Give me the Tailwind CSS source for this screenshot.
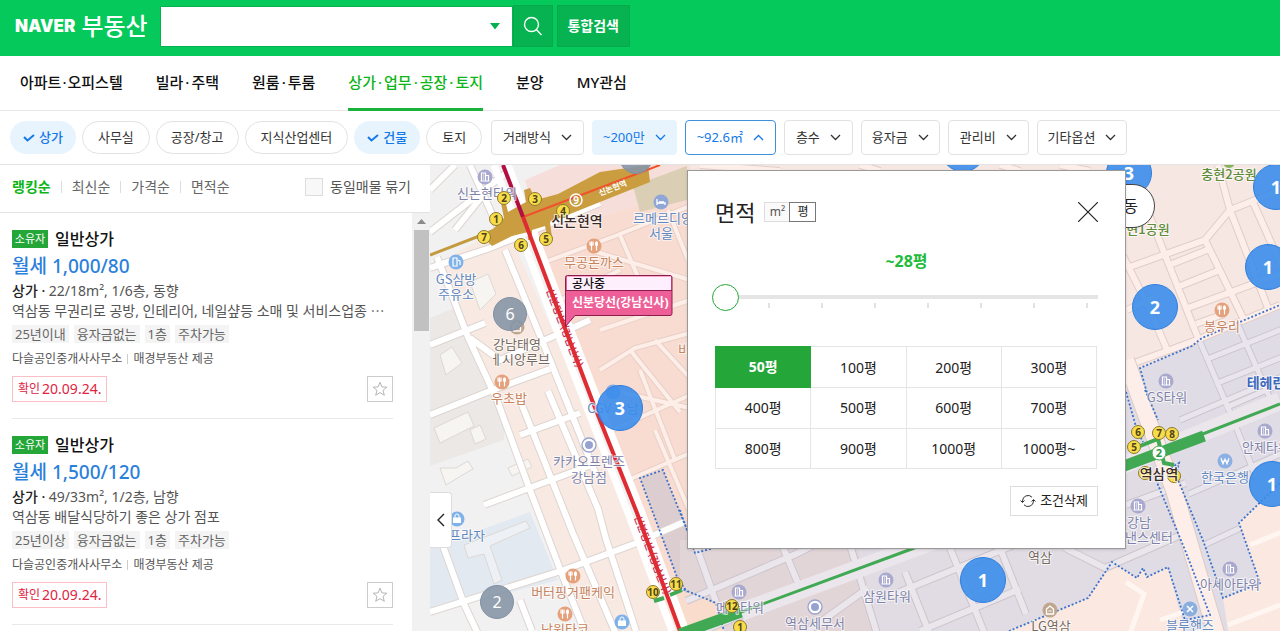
<!DOCTYPE html>
<html lang="ko">
<head>
  <meta charset="UTF-8" />
  <meta name="viewport" content="width=device-width, initial-scale=1.0" />
  <title>네이버 부동산</title>
  <script src="https://cdn.jsdelivr.net/npm/@tailwindcss/browser@4"></script>
  <style>
    body {
      font-family: 'Noto Sans', 'Noto Sans CJK KR', sans-serif;
    }
  </style>
</head>
<body class="h-screen flex flex-col overflow-hidden bg-white text-[#222]">

  <!-- Header -->
  <header class="flex items-center h-14 shrink-0 bg-[#05c95b] pl-[15px] pb-1">
    <a href="#" class="flex items-center gap-1.5 text-white mr-3">
      <span class="font-['Inter'] font-black text-[17px] leading-6">NAVER</span>
      <span class="text-2xl leading-8 font-medium">부동산</span>
    </a>
    <form class="flex items-center" role="search">
      <div class="relative">
        <input type="text" aria-label="검색어" class="block w-[353px] h-[41px] bg-white border border-[#04b34f] px-3 text-sm outline-none" />
        <svg class="absolute right-[13px] top-[17px]" width="10" height="7" viewBox="0 0 10 7"><path d="M0 0h10L5 6.5z" fill="#04b050" /></svg>
      </div>
      <button type="submit" aria-label="검색" class="flex items-center justify-center w-10 h-[42px] bg-[#06b350] border border-[#04a94a]">
        <svg width="20" height="20" viewBox="0 0 20 20" fill="none" stroke="#fff" stroke-width="1.4"><circle cx="8.5" cy="8.5" r="7" /><path d="M13.5 13.8 18.5 19" /></svg>
      </button>
      <button type="button" class="ml-1 w-[73px] h-[42px] bg-[#06b350] border border-[#04a94a] text-white text-sm font-bold">통합검색</button>
    </form>
  </header>

  <!-- Menu -->
  <nav class="flex gap-[33px] h-[55px] shrink-0 pl-5 border-b border-[#e8e8e8] text-[15px] font-medium text-[#111]">
    <a href="#" class="flex items-center pb-0.5">아파트<span class="mx-px">·</span>오피스텔</a>
    <a href="#" class="flex items-center pb-0.5">빌라<span class="mx-0.5">·</span>주택</a>
    <a href="#" class="flex items-center pb-0.5">원룸<span class="mx-0.5">·</span>투룸</a>
    <a href="#" class="flex items-center pb-0.5 border-y-3 border-t-transparent border-b-[#19b33c] -mb-px text-[#0db519]">상가<span class="mx-0.5">·</span>업무<span class="mx-0.5">·</span>공장<span class="mx-0.5">·</span>토지</a>
    <a href="#" class="flex items-center pb-0.5">분양</a>
    <a href="#" class="flex items-center pb-0.5">MY관심</a>
  </nav>

  <!-- Filters -->
  <div class="flex items-center h-[54px] shrink-0 pl-2.5 border-b border-[#e3e3e3] text-[13px] text-[#333]">
    <div class="flex gap-1.5">
      <button type="button" aria-pressed="true" class="flex items-center gap-1 h-[33px] px-[13px] rounded-full bg-[#e7f3fd] text-[#1479e8] font-medium">
        <svg width="12" height="8" viewBox="0 0 12 8" fill="none" stroke="#1479e8" stroke-width="2"><path d="M1 3l3.5 3.5L11 1" /></svg>상가
      </button>
      <button type="button" aria-pressed="false" class="h-[33px] px-[15px] rounded-full border border-[#e2e2e2]">사무실</button>
      <button type="button" aria-pressed="false" class="h-[33px] px-3.5 rounded-full border border-[#e2e2e2]">공장/창고</button>
      <button type="button" aria-pressed="false" class="h-[33px] px-[15px] rounded-full border border-[#e2e2e2]">지식산업센터</button>
      <button type="button" aria-pressed="true" class="flex items-center gap-1 h-[33px] px-[13px] rounded-full bg-[#e7f3fd] text-[#1479e8] font-medium">
        <svg width="12" height="8" viewBox="0 0 12 8" fill="none" stroke="#1479e8" stroke-width="2"><path d="M1 3l3.5 3.5L11 1" /></svg>건물
      </button>
      <button type="button" aria-pressed="false" class="h-[33px] px-[15px] rounded-full border border-[#e2e2e2]">토지</button>
    </div>
    <div class="flex gap-2 ml-[9px]">
      <button type="button" aria-expanded="false" class="flex items-center gap-2.5 h-[35px] px-[11px] rounded-sm border border-[#e2e2e2]">거래방식
        <svg width="11" height="7" viewBox="0 0 11 7" fill="none" stroke="#333" stroke-width="1.3"><path d="M1 1l4.5 4.5L10 1" /></svg>
      </button>
      <button type="button" aria-expanded="false" class="flex items-center gap-2.5 h-[35px] px-2.5 rounded-sm border border-[#e7f3fd] bg-[#e7f3fd] text-[#1479e8]">~200만
        <svg width="11" height="7" viewBox="0 0 11 7" fill="none" stroke="#1479e8" stroke-width="1.3"><path d="M1 1l4.5 4.5L10 1" /></svg>
      </button>
      <button type="button" aria-expanded="true" class="flex items-center gap-2.5 h-[35px] px-[11px] rounded-sm border border-[#3f8fdb] text-[#1479e8]">~92.6㎡
        <svg width="11" height="7" viewBox="0 0 11 7" fill="none" stroke="#1479e8" stroke-width="1.3"><path d="M1 6l4.5-4.5L10 6" /></svg>
      </button>
      <button type="button" aria-expanded="false" class="flex items-center gap-2.5 h-[35px] px-[11px] rounded-sm border border-[#e2e2e2]">층수
        <svg width="11" height="7" viewBox="0 0 11 7" fill="none" stroke="#333" stroke-width="1.3"><path d="M1 1l4.5 4.5L10 1" /></svg>
      </button>
      <button type="button" aria-expanded="false" class="flex items-center gap-2.5 h-[35px] px-2.5 rounded-sm border border-[#e2e2e2]">융자금
        <svg width="11" height="7" viewBox="0 0 11 7" fill="none" stroke="#333" stroke-width="1.3"><path d="M1 1l4.5 4.5L10 1" /></svg>
      </button>
      <button type="button" aria-expanded="false" class="flex items-center gap-2.5 h-[35px] px-[11px] rounded-sm border border-[#e2e2e2]">관리비
        <svg width="11" height="7" viewBox="0 0 11 7" fill="none" stroke="#333" stroke-width="1.3"><path d="M1 1l4.5 4.5L10 1" /></svg>
      </button>
      <button type="button" aria-expanded="false" class="flex items-center gap-2.5 h-[35px] px-2.5 rounded-sm border border-[#e2e2e2]">기타옵션
        <svg width="11" height="7" viewBox="0 0 11 7" fill="none" stroke="#333" stroke-width="1.3"><path d="M1 1l4.5 4.5L10 1" /></svg>
      </button>
    </div>
  </div>

  <main class="flex flex-1 min-h-0">

    <!-- Listings -->
    <aside class="flex flex-col w-[430px] shrink-0">
      <div class="flex items-center justify-between h-12 shrink-0 pl-3 pr-[19px] pb-1 border-b border-[#e3e3e3] text-sm text-[#666]">
        <div class="flex items-center gap-2.5">
          <button type="button" class="font-bold text-[#0db519]">랭킹순</button>
          <span class="w-px h-3 bg-[#ddd]"></span>
          <button type="button">최신순</button>
          <span class="w-px h-3 bg-[#ddd]"></span>
          <button type="button">가격순</button>
          <span class="w-px h-3 bg-[#ddd]"></span>
          <button type="button">면적순</button>
        </div>
        <label class="flex items-center gap-[7px] text-[#555]">
          <input type="checkbox" class="appearance-none size-[18px] border border-[#ddd] bg-[#f8f8f8]" />동일매물 묶기
        </label>
      </div>

      <div class="flex flex-1 min-h-0">
        <div class="flex-1 min-w-0 overflow-hidden pl-3 pr-[19px]">
          <article class="pt-3.5 pb-4 border-b border-[#e8e8e8] text-sm text-[#555]">
            <h2 class="flex items-center gap-[7px] h-6 text-base font-medium text-[#111]">
              <span class="w-9 h-[18px] bg-[#24a639] text-white text-[11px] leading-[17px] font-normal text-center">소유자</span>일반상가
            </h2>
            <p class="text-[19px] leading-[30px] font-medium text-[#2b80dc]">월세 1,000/80</p>
            <p class="leading-5"><span class="font-medium text-[#222]">상가 ·</span> 22/18m², 1/6층, 동향</p>
            <p class="leading-5 truncate">역삼동 무권리로 공방, 인테리어, 네일샾등 소매 및 서비스업종 ⋯</p>
            <ul class="flex gap-[5px] mt-1 text-[13px] leading-[18px] text-[#666]">
              <li class="bg-[#f4f4f4] px-[3px]">25년이내</li>
              <li class="bg-[#f4f4f4] px-[3px]">융자금없는</li>
              <li class="bg-[#f4f4f4] px-[3px]">1층</li>
              <li class="bg-[#f4f4f4] px-[3px]">주차가능</li>
            </ul>
            <p class="flex items-center gap-[5px] mt-1.5 text-xs leading-5">다슬공인중개사사무소<span class="w-px h-2.5 bg-[#ccc]"></span>매경부동산 제공</p>
            <div class="flex items-center justify-between mt-[7px]">
              <span class="flex items-center gap-0.5 h-[26px] px-[5px] border border-[#fbc0c6] text-[#e0233f] text-xs">확인<span class="text-sm">20.09.24.</span></span>
              <button type="button" aria-label="관심매물 등록" class="flex items-center justify-center size-[26px] border border-[#ccc]">
                <svg width="16" height="16" viewBox="0 0 16 16" fill="none" stroke="#b5b5b5"><path d="M8 1.2l1.9 4.7 5 .3-3.9 3.2 1.3 4.9L8 11.6l-4.3 2.7L5 9.4 1.1 6.2l5-.3z" /></svg>
              </button>
            </div>
          </article>

          <article class="pt-3.5 pb-4 border-b border-[#e8e8e8] text-sm text-[#555]">
            <h2 class="flex items-center gap-[7px] h-6 text-base font-medium text-[#111]">
              <span class="w-9 h-[18px] bg-[#24a639] text-white text-[11px] leading-[17px] font-normal text-center">소유자</span>일반상가
            </h2>
            <p class="text-[19px] leading-[30px] font-medium text-[#2b80dc]">월세 1,500/120</p>
            <p class="leading-5"><span class="font-medium text-[#222]">상가 ·</span> 49/33m², 1/2층, 남향</p>
            <p class="leading-5 truncate">역삼동 배달식당하기 좋은 상가 점포</p>
            <ul class="flex gap-[5px] mt-1 text-[13px] leading-[18px] text-[#666]">
              <li class="bg-[#f4f4f4] px-[3px]">25년이상</li>
              <li class="bg-[#f4f4f4] px-[3px]">융자금없는</li>
              <li class="bg-[#f4f4f4] px-[3px]">1층</li>
              <li class="bg-[#f4f4f4] px-[3px]">주차가능</li>
            </ul>
            <p class="flex items-center gap-[5px] mt-1.5 text-xs leading-5">다슬공인중개사사무소<span class="w-px h-2.5 bg-[#ccc]"></span>매경부동산 제공</p>
            <div class="flex items-center justify-between mt-[7px]">
              <span class="flex items-center gap-0.5 h-[26px] px-[5px] border border-[#fbc0c6] text-[#e0233f] text-xs">확인<span class="text-sm">20.09.24.</span></span>
              <button type="button" aria-label="관심매물 등록" class="flex items-center justify-center size-[26px] border border-[#ccc]">
                <svg width="16" height="16" viewBox="0 0 16 16" fill="none" stroke="#b5b5b5"><path d="M8 1.2l1.9 4.7 5 .3-3.9 3.2 1.3 4.9L8 11.6l-4.3 2.7L5 9.4 1.1 6.2l5-.3z" /></svg>
              </button>
            </div>
          </article>
        </div>
        <div class="flex flex-col items-center w-[18px] bg-[#f1f1f1]">
          <svg class="my-1.5" width="9" height="5" viewBox="0 0 9 5"><path d="M0 5h9L4.5 0z" fill="#8a8a8a" /></svg>
          <span class="w-[15px] h-[101px] bg-[#c1c1c1]"></span>
        </div>
      </div>
    </aside>

    <!-- Map -->
    <section class="relative flex-1 overflow-hidden bg-[#f6e7e3]">
      <svg class="block w-full h-full" viewBox="430 165 850 466" preserveAspectRatio="xMinYMin slice">
        <defs>
          <symbol id="building" viewBox="0 0 16 16"><circle cx="8" cy="8" r="7.5" fill="#a9a8cf" /><path d="M4.5 12V4h4v8M8.500 6.500h3V12M3.500 12h9M6 6h1M6 8h1M6 10h1" fill="none" stroke="#fff" stroke-width="1.2" /></symbol>
          <symbol id="food" viewBox="0 0 16 16"><circle cx="8" cy="8" r="7.5" fill="#e5a17c" /><path d="M5.500 3.500v9M4 3.500V7h3V3.500M10.500 8v4.500" fill="none" stroke="#fff" stroke-width="1.2" /><ellipse cx="10.500" cy="5.800" rx="1.600" ry="2.500" fill="#fff" /></symbol>
          <symbol id="dot" viewBox="0 0 16 16"><circle cx="8" cy="8" r="7" fill="#fff" stroke="#98a2cf" stroke-width="1.3" /><circle cx="8" cy="8" r="4" fill="#98a2cf" /></symbol>
          <symbol id="bag" viewBox="0 0 16 16"><circle cx="8" cy="8" r="7.5" fill="#7fb2ea" /><path d="M4 6.500h8V12H4z" fill="#fff" /><path d="M6 7V5a2 2 0 0 1 4 0v2" fill="none" stroke="#fff" /></symbol>
          <symbol id="home" viewBox="0 0 16 16"><circle cx="8" cy="8" r="7.5" fill="#bfa78f" /><path d="M4.500 12V7L8 4l3.500 3v5z" fill="none" stroke="#fff" stroke-width="1.300" /><path d="M6.500 9h3" stroke="#fff" /></symbol>
          <clipPath id="business"><path d="M1140 368 1192 346 1202 338 1280 305V483L1239 523 1260 583 1223 598 1204 543 1179 463 1165 440 1145 385z" /></clipPath>
        </defs>

        <!-- land -->
        <path d="M430 165H640L687 631H430z" fill="#f2f1f1" />
        <path d="M430 318 474 300 504 382 504 440 430 466z" fill="#ebe8e5" />
        <path d="M430 548 530 512 558 580 464 604 430 610z" fill="#e2e9f1" />
        <path d="M440 262 506 225 600 440 680 631H587L497 400z" fill="#f8eae2" />
        <path d="M520 200 650 165H687V640H684L600 400z" fill="#f8dcd1" />
        <path d="M525 180 560 165H690V190L540 235z" fill="#f6dfda" />
        <path d="M633 186 687 166V200L640 212z" fill="#dacfb4" />
        <path d="M640 478 663 470 687 530V592L677 577z" fill="#dccdd1" />
        <path d="M680 540H860L884 631H680z" fill="#e2d5d7" />
        <path d="M855 540H1160L1220 631H880z" fill="#e1dce4" />
        <path d="M1140 368 1192 346 1202 338 1280 305V631H1120V400z" fill="#e0dce5" />
        <path d="M1126 400H1150L1190 560H1126z" fill="#e1dce4" />
        <path d="M1009 631 1088 598 1112 562 1137 578 1143 568 1147 577 1168 567 1185 631z" fill="#fae8e1" />
        <path d="M1223 598 1260 583 1239 523 1280 483V631H1228z" fill="#fae8e1" />
        <path d="M680 590 716 603 724 631H680z" fill="#fadccd" />

        <!-- parcels -->
        <g fill="#f7f5f2" stroke="#ddd8d4">
          <path d="M434 428l34-16 6 14-34 17zM470 430l10-5 6 14-11 5zM440 468l16 0 12-7 5 8-14 8-13 8z" />
          <path d="M470 282l18-8 8 20-16 16zM440 355l12-8 10 16-16 12zM508 468l20-9 4 8-20 9z" />
          <path d="M464 545l62-24 4 7-40 18 12 34-8 4-10-30-16 4z" fill="#edf0f4" />
        </g>

        <!-- roads -->
        <g fill="none" stroke="#ddd5d1" stroke-width="8">
          <path d="M430 190l25-25M430 232l80-62M470 165l35 78M455 230l40-50M430 268l60-20 110-45M437 257l13 33 18 47 29 63 33 90 33 87 24 60M430 345l55-22M430 415l60-24 60-22M430 510l34 94 14 30M430 612l134-42 70-26 50-22M484 505l40-15 70-26M520 400l54 136 42 98M548 391l50 118 8 30 30 92M505 250l45 110 46 115M520 600l12 31M470 338l30 22 90-40M520 435l60-22" />
        </g>
        <g fill="none" stroke="#fff" stroke-width="6">
          <path d="M430 190l25-25M430 232l80-62M470 165l35 78M455 230l40-50M430 268l60-20 110-45M437 257l13 33 18 47 29 63 33 90 33 87 24 60M430 345l55-22M430 415l60-24 60-22M430 510l34 94 14 30M430 612l134-42 70-26 50-22M484 505l40-15 70-26M520 400l54 136 42 98M548 391l50 118 8 30 30 92M505 250l45 110 46 115M520 600l12 31M470 338l30 22 90-40M520 435l60-22" />
        </g>
        <g fill="none" stroke="#e9cfc7" stroke-width="6">
          <path d="M545 262l70-26 75-30M560 300l60-30M590 250l100 30M600 330l90-30M600 370l35-22 55-15M610 390l80 18M630 350l50 62M655 340l35 38M612 430l76-34M628 480l60-26M640 370l35 90M620 235l30 70M668 210l20 50M655 430l34 80" />
        </g>
        <g fill="none" stroke="#fdeee8" stroke-width="4">
          <path d="M545 262l70-26 75-30M560 300l60-30M590 250l100 30M600 330l90-30M600 370l35-22 55-15M610 390l80 18M630 350l50 62M655 340l35 38M612 430l76-34M628 480l60-26M640 370l35 90M620 235l30 70M668 210l20 50M655 430l34 80" />
        </g>
        <g fill="none" stroke="#e0cdc8" stroke-width="8">
          <path d="M1127 268l78-28 25-30 50-20M1127 165l23 52 50 126M1110 230l40 80 18 42M1126 366l71-26 83-35M1205 240l40 82M1218 165l12 45 38 98M1252 200l34 76M1172 264l35-14M1180 286l40-16M1188 308l92-34M1196 324l28-10M1127 310l30-14M700 165l80 6M860 165l20 6M1000 165l20 6M1060 165l30 6" />
        </g>
        <g fill="none" stroke="#fdeeea" stroke-width="6">
          <path d="M1127 268l78-28 25-30 50-20M1127 165l23 52 50 126M1110 230l40 80 18 42M1126 366l71-26 83-35M1205 240l40 82M1218 165l12 45 38 98M1252 200l34 76M1172 264l35-14M1180 286l40-16M1188 308l92-34M1196 324l28-10M1127 310l30-14M700 165l80 6M860 165l20 6M1000 165l20 6M1060 165l30 6" />
        </g>
        <g fill="none" stroke="#cbc5d0" stroke-width="7" clip-path="url(#business)">
          <path d="M1200 342l32 75 24 60M1238 325l34 78M1205 360l80-32M1215 384l70-28M1225 408l60-26M1180 420l104-44M1175 500l110-48M1204 545l60-28" />
        </g>
        <g fill="none" stroke="#e9e5ed" stroke-width="5" clip-path="url(#business)">
          <path d="M1200 342l32 75 24 60M1238 325l34 78M1205 360l80-32M1215 384l70-28M1225 408l60-26M1180 420l104-44M1175 500l110-48M1204 545l60-28" />
        </g>
        <g fill="none" stroke="#cdc5cd" stroke-width="8">
          <path d="M686 601l110-47 20-10M694 540l22 62M780 540l20 48M680 640l190-77M868 588l-60 43M850 545l28 92M905 572l24 60M950 548l34 84M1000 548l26 66M890 596l160-66M920 631l100-42M1065 548l40 20 78-34M1126 505l60-22" />
        </g>
        <g fill="none" stroke="#ebe6ec" stroke-width="6">
          <path d="M686 601l110-47 20-10M694 540l22 62M780 540l20 48M680 640l190-77M868 588l-60 43M850 545l28 92M905 572l24 60M950 548l34 84M1000 548l26 66M890 596l160-66M920 631l100-42M1065 548l40 20 78-34M1126 505l60-22" />
        </g>
        <path d="M741 612 917 547 1128 463 1280 401" fill="none" stroke="#ebe6ec" stroke-width="18" />
        <path d="M1126 360 1148 420 1174 490 1218 640" fill="none" stroke="#dccbc8" stroke-width="18" />
        <path d="M1126 360 1148 420 1174 490 1218 640" fill="none" stroke="#fdeee9" stroke-width="16" />
        <path d="M1126 582l18 12-14 40M1160 620l24-8M1250 545l34-14M1228 625l52-20" fill="none" stroke="#fff6f2" stroke-width="5" />

        <!-- district outline -->
        <g fill="none" stroke="#3a72cc" stroke-width="1.8" stroke-dasharray="2 2">
          <path d="M687 530 663 470 640 478 677 577 687 592M680 588 716 603 724 631M680 510 695 553 714 548" />
          <path d="M1149 400 1140 368 1192 346 1202 338 1280 305M1126 392 1137 430 1143 442M1145 390 1158 420" />
          <path d="M1171 468 1179 463 1176 475 1204 543 1223 598 1260 583 1239 523 1280 483" />
          <path d="M1156 480 1185 550 1210 615 1185 620 1168 567 1147 577 1143 568 1137 578 1112 562 1088 598 1009 631" />
        </g>

        <!-- Gangnam-daero and subway lines -->
        <path d="M494 165 514 217 554 323 628 513 672 631" fill="none" stroke="#fff" stroke-width="7" />
        <path d="M508 165 528 217 568 323 642 513 686 631" fill="none" stroke="#fff" stroke-width="7" />
        <path d="M430 255 500 228" stroke="#c49a3f" stroke-width="3" />
        <path d="M484 238 492 246 512 236 528 232 528 240 532 240 532 230 545 226 548 240 552 238 550 222 650 182 648 165 600 172 558 194 536 200 530 188 524 190 526 202 508 212 504 196 500 198 504 218z" fill="#c99d40" />
        <path d="M523 217 660 165" stroke="#f0522a" stroke-width="2" />
        <path d="M503 165 523 217" stroke="#b30e42" stroke-width="4" />
        <g font-size="10" font-weight="500" fill="#c7234f" font-family="Noto Sans CJK KR">
          <text transform="translate(546 290) rotate(69)">신분당선 (강남신사)</text>
          <text transform="translate(634 517) rotate(69)">신분당선 (강남신사)</text>
        </g>
        <path d="M523 217 563 323 592 400 637 513 680 631" fill="none" stroke="#df2c33" stroke-width="4" />
        <path d="M680 634 741 612 917 547 1128 463 1280 404" fill="none" stroke="#41a954" stroke-width="3" />
        <path d="M680 634 741 612M1124 466 1204 436" fill="none" stroke="#41a954" stroke-width="11" />
        <path d="M654 601l10-3M670 595l12-5M1140 446l18-7 6 24 10 2" fill="none" stroke="#41a954" stroke-width="4" />
        <text transform="translate(600 196) rotate(-21)" font-size="8" font-weight="700" fill="#fff">신논현역</text>

        <!-- places -->
        <use href="#building" x="477" y="169" width="16" height="16" />
        <use href="#food" x="586" y="238" width="16" height="16" />
        <use href="#food" x="494" y="374" width="16" height="16" />
        <use href="#food" x="565" y="568" width="16" height="16" />
        <use href="#food" x="557" y="606" width="16" height="16" />
        <use href="#food" x="1214" y="302" width="16" height="16" />
        <use href="#dot" x="581" y="437" width="16" height="16" />
        <use href="#dot" x="807" y="599" width="16" height="16" />
        <use href="#bag" x="449" y="511" width="16" height="16" />
        <use href="#bag" x="614" y="614" width="16" height="16" />
        <use href="#home" x="509" y="319" width="16" height="16" />
        <use href="#home" x="1042" y="602" width="16" height="16" />
        <use href="#building" x="731" y="584" width="16" height="16" />
        <use href="#building" x="878" y="572" width="16" height="16" />
        <use href="#building" x="1158" y="373" width="16" height="16" />
        <use href="#building" x="1257" y="423" width="16" height="16" />
        <use href="#building" x="1130" y="498" width="16" height="16" />
        <use href="#building" x="1222" y="561" width="16" height="16" />
        <g>
          <circle cx="456" cy="262" r="7.500" fill="#7fb2ea" /><path d="M453 266v-8h4v8zM458 260l2 1v4" fill="none" stroke="#fff" stroke-width="1.200" />
          <circle cx="661" cy="202" r="7.500" fill="#8fa6d6" /><path d="M657 199v6M657 203h8v2M659 202h5" fill="none" stroke="#fff" stroke-width="1.300" />
          <circle cx="1225" cy="461" r="7.500" fill="#8cb0e4" /><path d="M1221 458l2 6 2-5 2 5 2-6M1221 461h8" fill="none" stroke="#fff" stroke-width="1.100" />
          <circle cx="1190" cy="609" r="7.500" fill="#8aaede" /><path d="M1187 606l6 6M1193 606l-6 6" stroke="#fff" stroke-width="1.600" />
          <circle cx="613" cy="392" r="7.500" fill="#7fa9e4" />
          <circle cx="1229" cy="162" r="6" fill="#85b35c" />
        </g>

        <g font-size="13" text-anchor="middle" stroke="#fff" stroke-opacity=".7" stroke-width="2" paint-order="stroke" stroke-linejoin="round" font-family="Noto Sans CJK KR">
          <g fill="#7f82a8">
            <text x="487" y="198">신논현타워</text><text x="589" y="466">카카오프렌즈</text><text x="589" y="482">강남점</text>
            <text x="740" y="612">메가타워</text><text x="815" y="628">역삼세무서</text><text x="887" y="601">삼원타워</text><text x="1167" y="402">GS타워</text>
            <text x="1266" y="452">안제타워</text><text x="1139" y="527">강남</text><text x="1149" y="542">낸스센터</text><text x="1230" y="589">아세아타워</text>
          </g>
          <g fill="#6288be">
            <text x="456" y="284">GS삼방</text><text x="456" y="299">주유소</text><text x="663" y="223">르메르디앙</text><text x="661" y="238">서울</text>
            <text x="613" y="413">CGV 강남</text><text x="467" y="540">프라자</text><text x="1225" y="482">한국은행</text><text x="1190" y="630">블루핸즈</text>
          </g>
          <g fill="#c8835d">
            <text x="594" y="267">무공돈까스</text><text x="509" y="403">우초밥</text><text x="573" y="597">버터핑거팬케익</text>
            <text x="565" y="634">낭원타코</text><text x="1222" y="331">봉우리</text><text x="684" y="354">비</text>
          </g>
          <g fill="#766960">
            <text x="517" y="349">강남태영</text><text x="520" y="364">ㅔ시앙루브</text><text x="1051" y="631">LG역삼</text><text x="1040" y="562">역삼</text>
          </g>
          <g fill="#5f8c38" font-weight="500">
            <text x="1229" y="179">충현2공원</text><text x="1142" y="234">충현1공원</text>
          </g>
          <text x="1266" y="388" font-size="14" font-weight="700" fill="#3c69bd">테헤란</text>
        </g>

        <!-- exits -->
        <g fill="#f8dc4a" stroke="#8c7a2a">
          <circle cx="504" cy="198" r="6.5" /><circle cx="535" cy="199" r="6.5" /><circle cx="563" cy="211" r="6.5" /><circle cx="496" cy="219" r="6.5" />
          <circle cx="484" cy="237" r="6.5" /><circle cx="521" cy="245" r="6.5" /><circle cx="546" cy="239" r="6.5" /><circle cx="653" cy="592" r="6.5" />
          <circle cx="676" cy="584" r="6.5" /><circle cx="732" cy="606" r="6.5" /><circle cx="740" cy="627" r="6.5" /><circle cx="1138" cy="432" r="6.5" />
          <circle cx="1159" cy="433" r="6.5" /><circle cx="1172" cy="434" r="6.5" /><circle cx="1134" cy="447" r="6.5" /><circle cx="1145" cy="473" r="6.5" /><circle cx="1174" cy="476" r="6.5" />
        </g>
        <g font-size="10" font-weight="700" fill="#4d4318" text-anchor="middle">
          <text x="504" y="202">2</text><text x="535" y="203">3</text><text x="563" y="215">4</text><text x="496" y="223">1</text>
          <text x="484" y="241">7</text><text x="521" y="249">6</text><text x="546" y="243">5</text><text x="653" y="596">10</text>
          <text x="676" y="588">11</text><text x="732" y="610">12</text><text x="740" y="631">1</text><text x="1138" y="436">6</text>
          <text x="1159" y="437">7</text><text x="1172" y="438">8</text><text x="1134" y="451">5</text>
        </g>
        <circle cx="576" cy="200" r="6" fill="none" stroke="#fff" stroke-width="1.500" />
        <text x="576" y="204" font-size="10" font-weight="700" fill="#fff" text-anchor="middle">9</text>
        <circle cx="1159" cy="453" r="7" fill="#fff" stroke="#41a954" />
        <text x="1159" y="457" font-size="11" font-weight="700" fill="#2f9a48" text-anchor="middle">2</text>

        <!-- stations -->
        <g font-size="14" font-weight="500" fill="#3a2b28" text-anchor="middle" stroke="#fff" stroke-opacity=".7" stroke-width="2" paint-order="stroke">
          <text x="577" y="226">신논현역</text>
          <text x="1159" y="479">역삼역</text>
        </g>

        <!-- line under construction -->
        <path d="M568 275.500h102a2 2 0 0 1 2 2v36a2 2 0 0 1-2 2h-95l-9.500 11v-49a2 2 0 0 1 2-2z" fill="#ee5f98" stroke="#8c1c4c" />
        <path d="M567 276.500h104v14H567z" fill="#fdeffc" />
        <path d="M566 290.500h106" stroke="#8c1c4c" />
        <text x="572" y="288" font-size="12" font-weight="500" fill="#111">공사중</text>
        <text x="572" y="307" font-size="12" font-weight="700" fill="#fff">신분당선(강남신사)</text>
      </svg>

      <!-- Markers -->
      <button type="button" class="absolute left-[63px] top-[132px] size-[34px] rounded-full border border-[#8291a3] bg-[#8796a7]/90 text-white text-base">6</button>
      <button type="button" class="absolute left-[50px] top-[420px] size-[34px] rounded-full border border-[#8291a3] bg-[#8796a7]/90 text-white text-base">2</button>
      <button type="button" aria-label="매물" class="absolute left-[189px] top-[-25px] size-[34px] rounded-full border border-[#8291a3] bg-[#8796a7]/90"></button>
      <button type="button" class="absolute left-[167px] top-[220px] size-[46px] rounded-full border border-[#2f7fdc] bg-[#3b8deb]/90 text-white text-lg font-bold">3</button>
      <button type="button" aria-label="매물" class="absolute left-[510px] top-[-39px] size-[46px] rounded-full border border-[#2f7fdc] bg-[#3b8deb]/90"></button>
      <button type="button" class="absolute left-[676px] top-[-15px] size-[46px] rounded-full border border-[#2f7fdc] bg-[#3b8deb]/90 text-white text-lg font-bold">3</button>
      <button type="button" class="absolute left-[823px] top-[-1px] size-[46px] rounded-full border border-[#2f7fdc] bg-[#3b8deb]/90 text-white text-lg font-bold">1</button>
      <button type="button" class="absolute left-[815px] top-[79px] size-[46px] rounded-full border border-[#2f7fdc] bg-[#3b8deb]/90 text-white text-lg font-bold">1</button>
      <button type="button" class="absolute left-[702px] top-[119px] size-[46px] rounded-full border border-[#2f7fdc] bg-[#3b8deb]/90 text-white text-lg font-bold">2</button>
      <button type="button" class="absolute left-[819px] top-[296px] size-[46px] rounded-full border border-[#2f7fdc] bg-[#3b8deb]/90 text-white text-lg font-bold">1</button>
      <button type="button" class="absolute left-[530px] top-[392px] size-[46px] rounded-full border border-[#2f7fdc] bg-[#3b8deb]/90 text-white text-lg font-bold">1</button>
      <button type="button" class="absolute left-[640px] top-[19px] w-[85px] h-[44px] pr-4 rounded-full border border-[#444] bg-white text-base text-right">역삼동</button>

      <button type="button" aria-label="목록 접기" class="absolute left-0 top-[327px] flex items-center justify-center w-[22px] h-14 rounded-r-sm border border-l-0 border-[#ddd] bg-white">
        <svg width="8" height="14" viewBox="0 0 8 14" fill="none" stroke="#222" stroke-width="1.4"><path d="M7 1L1 7l6 6" /></svg>
      </button>

      <!-- Area filter -->
      <div class="absolute left-[257px] top-[5px] w-[439px] px-[27px] pt-[25px] pb-8 border border-[#999] bg-white shadow-sm">
        <div class="flex items-center h-8">
          <h3 class="text-[22px] leading-8">면적</h3>
          <div class="flex ml-[9px] text-xs">
            <button type="button" class="w-[25px] h-5 border border-r-0 border-[#ddd] bg-[#fafafa] text-[#555]">m²</button>
            <button type="button" class="w-[27px] h-5 border border-[#777] leading-4">평</button>
          </div>
          <button type="button" aria-label="닫기" class="ml-auto">
            <svg width="20" height="20" viewBox="0 0 20 20" fill="none" stroke="#222" stroke-width="1.2"><path d="M0 0l20 20M20 0L0 20" /></svg>
          </button>
        </div>
        <p class="mt-[21px] text-base font-bold text-center text-[#22bb3a]">~28평</p>
        <div class="-ml-[3px] mt-[11px] h-[26px] flex items-center">
          <input type="range" min="0" max="100" value="0" aria-label="면적" class="w-full h-[4px] appearance-none bg-[#e5e5e5] [&::-webkit-slider-thumb]:appearance-none [&::-webkit-slider-thumb]:size-[27px] [&::-webkit-slider-thumb]:rounded-full [&::-webkit-slider-thumb]:border [&::-webkit-slider-thumb]:border-[#24a639] [&::-webkit-slider-thumb]:bg-white" />
        </div>
        <div class="flex justify-between -mt-[7px] pl-[53px] pr-2.5">
          <span class="w-0.5 h-[5px] bg-[#e2e2e2]"></span>
          <span class="w-0.5 h-[5px] bg-[#e2e2e2]"></span>
          <span class="w-0.5 h-[5px] bg-[#e2e2e2]"></span>
          <span class="w-0.5 h-[5px] bg-[#e2e2e2]"></span>
          <span class="w-0.5 h-[5px] bg-[#e2e2e2]"></span>
          <span class="w-0.5 h-[5px] bg-[#e2e2e2]"></span>
          <span class="w-0.5 h-[5px] bg-[#e2e2e2]"></span>
        </div>
        <div class="grid grid-cols-4 gap-px mt-[38px] mr-px p-px bg-[#e5e5e5] text-sm">
          <button type="button" class="-m-px h-[42px] bg-[#24a639] text-white font-bold">50평</button>
          <button type="button" class="h-10 bg-white pt-0.5">100평</button>
          <button type="button" class="h-10 bg-white pt-0.5">200평</button>
          <button type="button" class="h-10 bg-white pt-0.5">300평</button>
          <button type="button" class="h-10 bg-white">400평</button>
          <button type="button" class="h-10 bg-white">500평</button>
          <button type="button" class="h-10 bg-white">600평</button>
          <button type="button" class="h-10 bg-white">700평</button>
          <button type="button" class="h-[39px] bg-white">800평</button>
          <button type="button" class="h-[39px] bg-white">900평</button>
          <button type="button" class="h-[39px] bg-white">1000평</button>
          <button type="button" class="h-[39px] bg-white">1000평~</button>
        </div>
        <div class="flex justify-end mt-[17px]">
          <button type="button" class="flex items-center gap-1 h-[30px] px-[9px] border border-[#ddd] text-[13px]">
            <svg width="16" height="14" viewBox="0 0 16 14" fill="none" stroke="#333"><path d="M2.500 8V7a5.500 5.500 0 0 1 9.500-3.800M13.500 6v1a5.500 5.500 0 0 1-9.500 3.800M.5 6.500l2 2 2-2M11.500 7.500l2-2 2 2" /></svg>조건삭제
          </button>
        </div>
      </div>
    </section>
  </main>

</body>
</html>
